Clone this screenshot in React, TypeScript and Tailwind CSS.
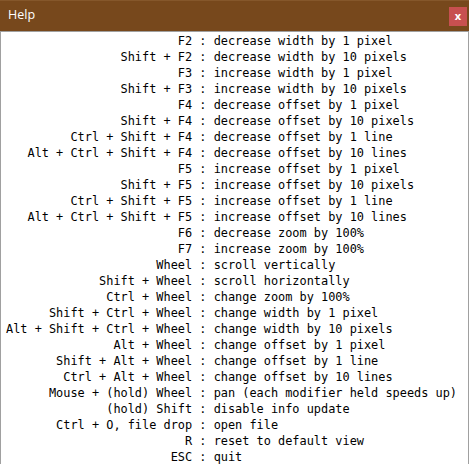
const rows: [string, string][] = [
  ["F2", "decrease width by 1 pixel"],
  ["Shift + F2", "decrease width by 10 pixels"],
  ["F3", "increase width by 1 pixel"],
  ["Shift + F3", "increase width by 10 pixels"],
  ["F4", "decrease offset by 1 pixel"],
  ["Shift + F4", "decrease offset by 10 pixels"],
  ["Ctrl + Shift + F4", "decrease offset by 1 line"],
  ["Alt + Ctrl + Shift + F4", "decrease offset by 10 lines"],
  ["F5", "increase offset by 1 pixel"],
  ["Shift + F5", "increase offset by 10 pixels"],
  ["Ctrl + Shift + F5", "increase offset by 1 line"],
  ["Alt + Ctrl + Shift + F5", "increase offset by 10 lines"],
  ["F6", "decrease zoom by 100%"],
  ["F7", "increase zoom by 100%"],
  ["Wheel", "scroll vertically"],
  ["Shift + Wheel", "scroll horizontally"],
  ["Ctrl + Wheel", "change zoom by 100%"],
  ["Shift + Ctrl + Wheel", "change width by 1 pixel"],
  ["Alt + Shift + Ctrl + Wheel", "change width by 10 pixels"],
  ["Alt + Wheel", "change offset by 1 pixel"],
  ["Shift + Alt + Wheel", "change offset by 1 line"],
  ["Ctrl + Alt + Wheel", "change offset by 10 lines"],
  ["Mouse + (hold) Wheel", "pan (each modifier held speeds up)"],
  ["(hold) Shift", "disable info update"],
  ["Ctrl + O, file drop", "open file"],
  ["R", "reset to default view"],
  ["ESC", "quit"],
];

export default function App() {
  return (
    <div className="w-[469px] h-[464px] flex flex-col bg-white overflow-hidden">
      {/* title bar */}
      <div className="h-[31px] shrink-0 bg-[#77481c] border-t border-[#85572b] flex items-center justify-between pl-2 pr-[2px]">
        <span
          className="text-white text-[12.5px] leading-none -mt-px"
          style={{ fontFamily: '"Open Sans", "Noto Sans", sans-serif' }}
        >
          Help
        </span>
        <div className="w-[18px] h-[19px] bg-[#c75050] flex items-center justify-center text-white text-[11px] font-bold leading-none pb-px">
          x
        </div>
      </div>

      {/* content */}
      <div
        className="flex-1 border-t border-x border-[#a0a0a0] pl-[5px] pt-px text-[11.9px] leading-[16px] text-black"
        style={{ fontFamily: '"DejaVu Sans Mono", "Liberation Mono", monospace' }}
      >
        <div className="grid grid-cols-[auto_auto_1fr]">
          {rows.map(([key, desc]) => (
            <div key={key} className="contents">
              <span className="text-right whitespace-pre">{key}</span>
              <span className="whitespace-pre"> : </span>
              <span className="whitespace-pre">{desc}</span>
            </div>
          ))}
        </div>
      </div>
    </div>
  );
}
